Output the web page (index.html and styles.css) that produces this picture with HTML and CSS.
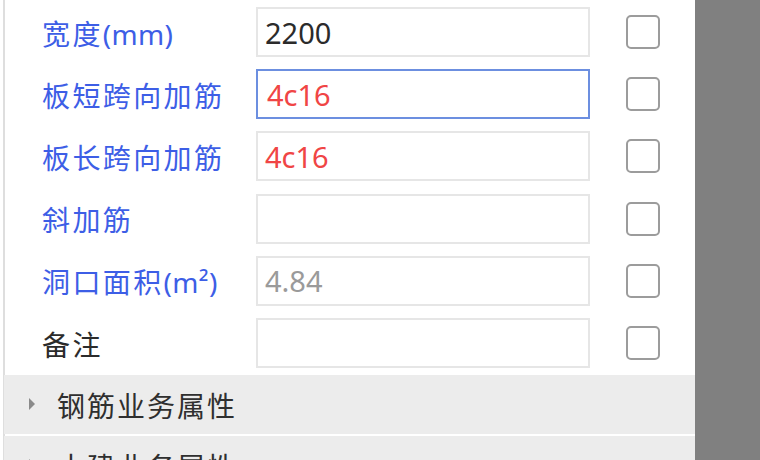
FILE: index.html
```html
<!DOCTYPE html>
<html lang="zh-CN">
<head>
<meta charset="utf-8">
<title>属性</title>
<link rel="stylesheet" href="styles.css">
</head>
<body>
<div class="screen">
  <div class="panel">
    <div class="rows">
      <div class="row">
        <div class="label blue">宽度<span class="latin">(mm)</span></div>
        <div class="field"><span class="val dark">2200</span></div>
        <div class="check"></div>
      </div>
      <div class="row">
        <div class="label blue">板短跨向加筋</div>
        <div class="field focus"><span class="val red">4c16</span></div>
        <div class="check"></div>
      </div>
      <div class="row">
        <div class="label blue">板长跨向加筋</div>
        <div class="field"><span class="val red">4c16</span></div>
        <div class="check"></div>
      </div>
      <div class="row">
        <div class="label blue">斜加筋</div>
        <div class="field"></div>
        <div class="check"></div>
      </div>
      <div class="row">
        <div class="label blue">洞口面积<span class="latin">(m²)</span></div>
        <div class="field"><span class="val grey">4.84</span></div>
        <div class="check"></div>
      </div>
      <div class="row">
        <div class="label dark">备注</div>
        <div class="field"></div>
        <div class="check"></div>
      </div>
    </div>
    <div class="section"><span class="tri"></span><span class="title">钢筋业务属性</span></div>
    <div class="section"><span class="tri"></span><span class="title">土建业务属性</span></div>
  </div>
  <div class="side"></div>
</div>
</body>
</html>
```

FILE: styles.css
```css
html, body {
  margin: 0;
  padding: 0;
  background: #ffffff;
  width: 760px;
  height: 460px;
  overflow: hidden;
}
.screen {
  display: flex;
  width: 760px;
  height: 460px;
  overflow: hidden;
  font-family: "Noto Sans", "Noto Sans CJK SC", sans-serif;
  font-size: 28px;
}
.panel {
  width: 690px;
  margin-left: 3px;
  border-left: 2px solid #dedede;
  background: #ffffff;
}
.side {
  flex: 1;
  background: #808080;
}
.rows {
  padding-top: 1px;
}
.row {
  display: grid;
  grid-template-columns: 214px 334px 70px;
  align-items: center;
  height: 62.2px;
  padding-left: 37px;
}
.label {
  letter-spacing: 2.4px;
  white-space: nowrap;
  line-height: 1;
  padding-top: 3px;
}
.latin {
  letter-spacing: 0.3px;
}
.blue { color: #3d5ee6; }
.dark { color: #2b2b2b; }
.red { color: #f04545; }
.grey { color: #9a9a9a; }
.field {
  box-sizing: border-box;
  height: 50px;
  border: 2px solid #e6e6e6;
  display: flex;
  align-items: center;
  padding-left: 7px;
  background: #ffffff;
}
.field.focus {
  border-color: #6c8fe0;
  padding-left: 9px;
}
.val {
  font-size: 29px;
  line-height: 1;
}
.check {
  box-sizing: border-box;
  width: 34px;
  height: 34px;
  margin-left: 36px;
  border: 2px solid #9c9c9c;
  border-radius: 5px;
}
.section {
  display: flex;
  align-items: center;
  height: 59px;
  margin-top: 1px;
  margin-bottom: 2px;
  margin-left: -1px;
  background: #ececec;
  padding-left: 25px;
  color: #2f2f2f;
}
.tri {
  width: 0;
  height: 0;
  border-top: 6px solid transparent;
  border-bottom: 6px solid transparent;
  border-left: 6px solid #8a8a8a;
  margin-top: -2px;
}
.title {
  margin-left: 22px;
  letter-spacing: 2px;
  line-height: 1;
  padding-top: 3px;
}
```
